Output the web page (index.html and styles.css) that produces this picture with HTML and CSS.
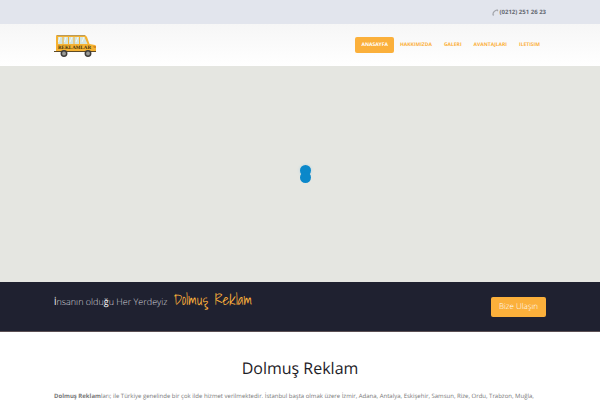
FILE: index.html
```html
<!DOCTYPE html>
<html lang="tr">
<head>
<meta charset="utf-8">
<meta name="viewport" content="width=device-width, initial-scale=1">
<title>Dolmuş Reklam</title>
<link rel="stylesheet" href="styles.css">
</head>
<body>
<div class="topbar">
  <div class="container topbar-row">
    <svg class="phone" viewBox="0 0 8 8" aria-hidden="true"><path d="M1 7C1 4 3.500 1.500 6.500 1M.7 6.500l1.600.5M5.500.8l1.300 1.500" fill="none" stroke="#a3a5ab" stroke-width="1.300"/></svg>
    <a class="tel" href="tel:+902122512623">(0212) 251 26 23</a>
  </div>
</div>
<header class="header">
  <div class="container header-row">
    <a class="logo" href="#" aria-label="Reklamlar">
      <svg viewBox="0 0 44 24">
        <path d="M2 3Q2 2 3 2H30Q32 2 33 4L35.500 11L41 12Q42 12 42 14V19H2V3Z" fill="#f5b232"/>
        <path d="M3 2.500H31" stroke="#b99a5a" stroke-width="1"/>
        <path d="M4 4H8.500V11H4ZM9.500 4H14V11H9.500ZM15 4H19.500V11H15ZM20.500 4H25V11H20.500ZM26 4H30.500L33.500 11H26Z" fill="#d3e5e0"/>
        <path d="M6 4L4.500 9M12 4L10.500 9M18 4L16 9M24 4L22 9M30 4L28 9" stroke="#f4faf6" stroke-width="1"/>
        <path d="M0 18.500H42" stroke="#5d4a26" stroke-width="1"/>
        <path d="M39 13H42V15H40Z" fill="#d88a22"/>
        <text class="logo-text" x="4" y="16">REKLAMLAR</text>
        <g fill="#9a9b98" stroke="#3f3d3b" stroke-width="1.500"><circle cx="10" cy="20.500" r="2.700"/><circle cx="34" cy="20.500" r="2.700"/></g>
      </svg>
    </a>
    <nav class="nav">
      <a class="active" href="#">ANASAYFA</a>
      <a href="#">HAKKIMIZDA</a>
      <a href="#">GALERI</a>
      <a href="#">AVANTAJLARI</a>
      <a href="#">ILETISIM</a>
    </nav>
  </div>
</header>
<section class="slider" aria-label="Slider">
  <div class="loader"><i></i><i></i></div>
</section>
<section class="promo">
  <div class="container promo-row">
    <p class="slogan"><span class="bright">İ</span>nsanın oldu<span class="bright">ğ</span>u Her Yerdeyiz <em>Dolmuş Reklam</em></p>
    <a class="button" href="#">Bize Ulaşın</a>
  </div>
</section>
<main class="container main">
  <h1>Dolmuş Reklam</h1>
  <p><strong>Dolmuş Reklam</strong>ları; ile Türkiye genelinde bir çok ilde hizmet verilmektedir. İstanbul başta olmak üzere İzmir, Adana, Antalya, Eskişehir, Samsun, Rize, Ordu, Trabzon, Muğla,</p>
</main>
</body>
</html>
```

FILE: styles.css
```css
* { box-sizing: border-box; }
body {
  margin: 0;
  font-family: "Open Sans", "Noto Sans", sans-serif;
  font-size: 6px;
  text-rendering: geometricPrecision;
  color: #777;
  background: #fff;
}
a { color: inherit; text-decoration: none; }
.container { width: 82%; margin: 0 auto; }
.topbar { background: #e2e5ed; }
.topbar-row {
  display: flex;
  align-items: center;
  justify-content: flex-end;
  gap: 1px;
  height: 24px;
}
.phone { width: 7px; height: 7px; }
.tel { font-weight: 700; color: #666a73; }
.header { background: linear-gradient(#f6f6f6, #fff); }
.header-row {
  display: flex;
  align-items: center;
  justify-content: space-between;
  height: 42px;
}
.logo svg { display: block; width: 44px; height: 24px; }
.logo-text {
  font: 700 5px "Liberation Serif", serif;
  fill: #41340f;
}
.nav {
  display: flex;
  font-size: 5px;
  font-weight: 700;
  color: #fbb03b;
}
.nav a { padding: 0 6px; line-height: 16px; border-radius: 2px; }
.nav .active { background: #fbb03b; color: #fff; }
.slider {
  display: flex;
  align-items: center;
  justify-content: center;
  height: 216px;
  padding-left: 10px;
  background: #e5e6e1;
}
.loader { display: flex; flex-direction: column; }
.loader i {
  width: 11px;
  height: 11px;
  border-radius: 50%;
  background: #0b88ca;
  box-shadow: 0 0 3px #b5d3df;
}
.loader i + i { margin-top: -4px; box-shadow: none; }
.promo { background: #1f2130; border-bottom: 1px solid #5b5054; }
.promo-row {
  display: flex;
  align-items: flex-start;
  justify-content: space-between;
  height: 49px;
  padding-top: 8px;
}
.slogan {
  margin: 0;
  font-size: 9px;
  font-weight: 300;
  line-height: 20px;
  color: #d5d5dc;
}
.bright { font-weight: 400; color: #fff; }
.slogan em {
  margin-left: 4px;
  font-family: "Shadows Into Light", "Liberation Sans Narrow", cursive;
  font-size: 15px;
  font-style: normal;
  font-weight: 400;
  color: #fbb03b;
}
.button {
  margin-top: 7px;
  padding: 0 8px;
  border-radius: 2px;
  background: #fbb03b;
  color: #fff;
  font-size: 8px;
  font-weight: 300;
  line-height: 20px;
}
.main h1 {
  margin: 24px 0 0;
  font-size: 16px;
  font-weight: 400;
  line-height: 24px;
  text-align: center;
  color: #1d2127;
}
.main p { margin: 10px 0 0; line-height: 12px; }
```
